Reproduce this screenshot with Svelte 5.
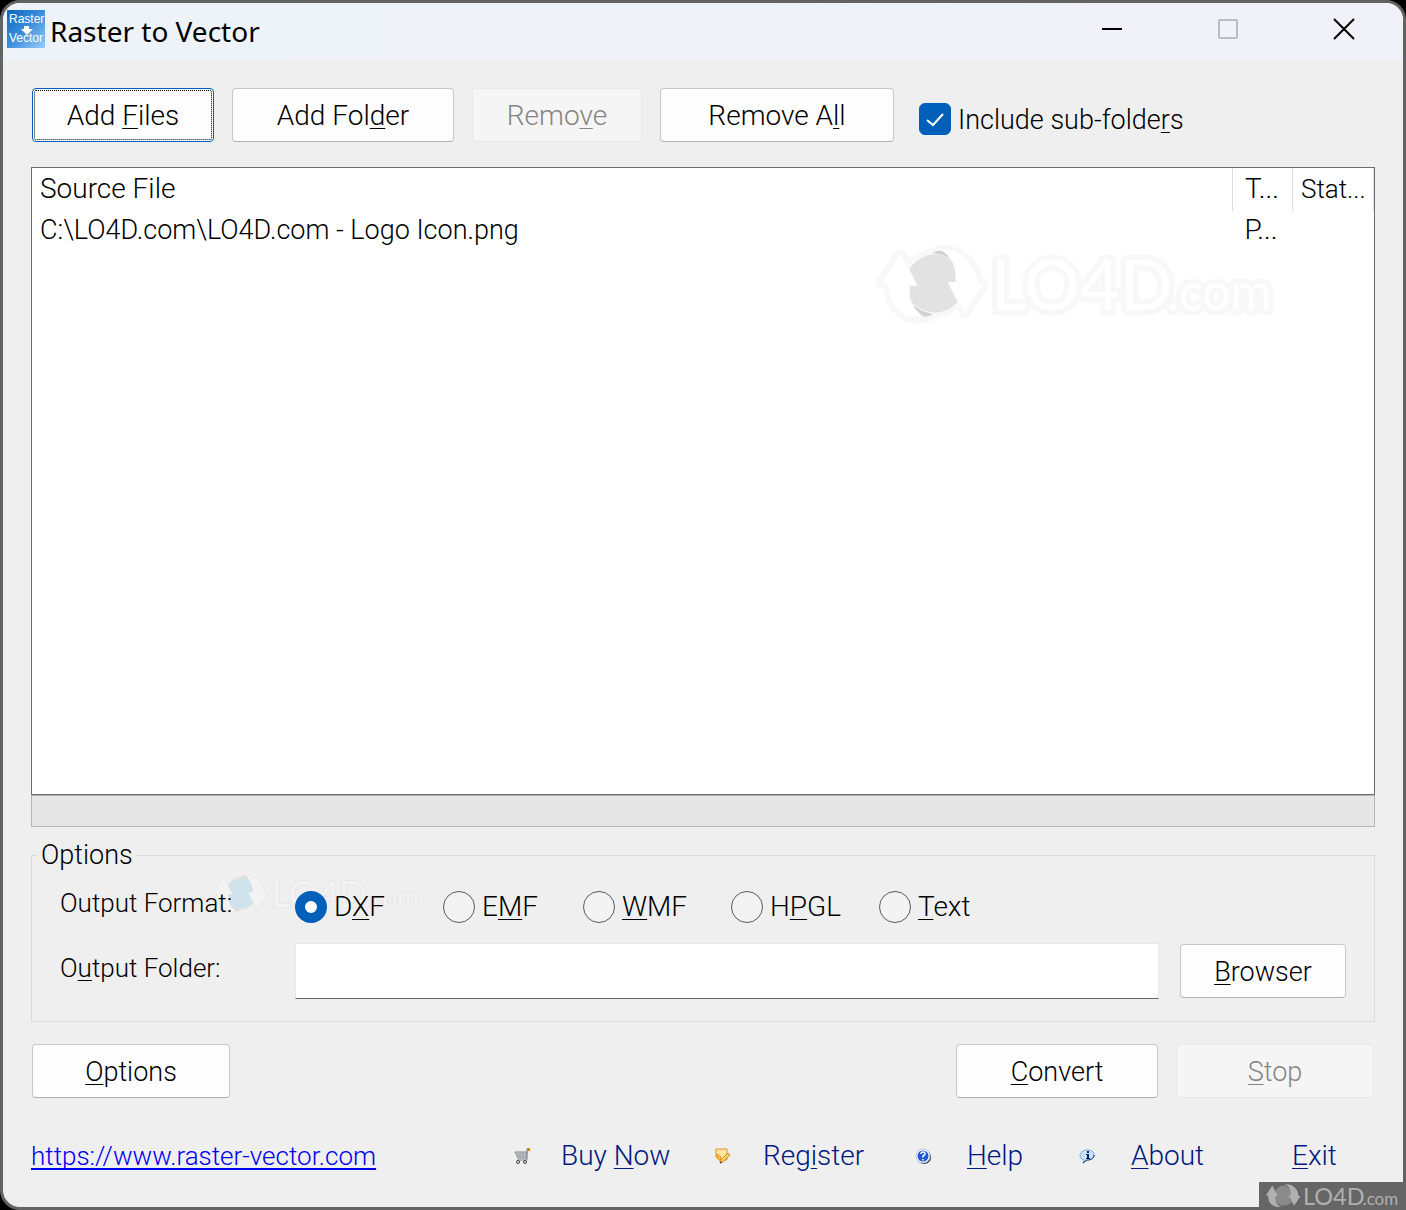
<script>
  let includeSub = $state(true);
  let format = $state('DXF');
  let folder = $state('');

  const formats = [
    { id: 'DXF', pre: 'D', key: 'X', post: 'F' },
    { id: 'EMF', pre: 'E', key: 'M', post: 'F' },
    { id: 'WMF', pre: '', key: 'W', post: 'MF' },
    { id: 'HPGL', pre: 'H', key: 'P', post: 'GL' },
    { id: 'Text', pre: '', key: 'T', post: 'ext' }
  ];
  const files = [{ source: 'C:\\LO4D.com\\LO4D.com - Logo Icon.png', type: 'P...', status: '' }];
</script>

{#snippet brand(kind)}
  <svg class="brand {kind}" viewBox="40 40 1230 250" aria-hidden="true">
    <g class="halo">
      <path d="M123 73 L173 166 H151 Q142 225 215 257 Q155 282 115 240 Q83 210 86 160 H64 Z" />
      <path d="M220 69 Q270 48 318 87 Q353 120 354 163 H372 L315 250 L264 157 H288 Q292 100 220 69 Z" />
      <circle cx="220" cy="162" r="88" />
      <text x="394" y="240" class="big">LO4D</text>
      <text x="922" y="240" class="small">.com</text>
    </g>
    <path class="ball" d="M149 119 Q180 75 225 74 Q262 76 289 103 L288 157 H264 L293 217 Q265 248 225 249 Q178 246 148 209 L151 168 H173 Z" />
    <path class="shade" d="M148 215 Q180 248 220 253 Q205 264 185 259 Q155 245 148 215 Z M218 70 Q235 60 256 64 Q285 78 289 101 Q265 75 218 70 Z" />
    <g class="face">
      <path d="M123 73 L173 166 H151 Q142 225 190 260 Q145 268 115 240 Q83 210 86 160 H64 Z" />
      <path d="M240 60 Q285 55 318 87 Q353 120 354 163 H372 L315 250 L264 157 H288 Q292 85 240 60 Z" />
      <text x="394" y="240" class="big">LO4D</text>
      <text x="922" y="240" class="small">.com</text>
    </g>
  </svg>
{/snippet}

<div class="window">
  <header>
    <svg class="app-icon" viewBox="0 0 38 38" aria-hidden="true">
      <defs>
        <linearGradient id="sky" x1="0" y1="0" x2="1" y2="1">
          <stop offset="0" stop-color="#0a67bd" />
          <stop offset=".5" stop-color="#3c8edb" />
          <stop offset="1" stop-color="#9ccbf6" />
        </linearGradient>
      </defs>
      <rect width="38" height="38" fill="url(#sky)" />
      <text x="2" y="13">Raster</text>
      <path d="M17 16h5v3h4l-6 6-6-6h3z" fill="#fff" />
      <text x="2" y="32">Vector</text>
    </svg>
    <h1>Raster to Vector</h1>
    <div class="captions">
      <button class="cap" aria-label="Minimize"><svg viewBox="0 0 22 22"><path d="M1 11H21" stroke="#000" stroke-width="2" /></svg></button>
      <button class="cap" aria-label="Maximize" disabled><svg viewBox="0 0 22 22"><rect x="2" y="2" width="18" height="18" rx="1" fill="none" stroke="#bdbdc0" stroke-width="2" /></svg></button>
      <button class="cap" aria-label="Close"><svg viewBox="0 0 22 22"><path d="M1 1L21 21M21 1L1 21" stroke="#000" stroke-width="2" /></svg></button>
    </div>
  </header>

  <main>
    <div class="toolbar">
      <button class="btn focused files">Add&nbsp;<u>F</u>iles</button>
      <button class="btn folder">Add Fol<u>d</u>er</button>
      <button class="btn remove" disabled>Remo<u>v</u>e</button>
      <button class="btn all">Remove A<u>l</u>l</button>
      <label class="check">
        <span class="tick">
          <input type="checkbox" bind:checked={includeSub} />
          {#if includeSub}<svg viewBox="0 0 32 32"><path d="M8 17L14 22L24 11" fill="none" stroke="#fff" stroke-width="2" /></svg>{/if}
        </span>
        <span class="check-text">Include sub-folde<u>r</u>s</span>
      </label>
    </div>

    <div class="list">
      <table>
        <colgroup><col /><col class="c-type" /><col class="c-status" /></colgroup>
        <thead>
          <tr><th>Source File</th><th>T...</th><th>Stat...</th></tr>
        </thead>
        <tbody>
          {#each files as f}
            <tr><td>{f.source}</td><td>{f.type}</td><td>{f.status}</td></tr>
          {/each}
        </tbody>
      </table>
      {@render brand('light')}
    </div>
    <div class="progress" role="progressbar" aria-label="Progress" aria-valuenow="0"></div>

    <fieldset>
      <legend>Options</legend>
      {@render brand('tinted')}
      <div class="formats" role="radiogroup" aria-labelledby="fmt">
        <span id="fmt" class="caption">Output Format:</span>
        {#each formats as f}
          <label class="radio {f.id.toLowerCase()}">
            <input type="radio" name="format" value={f.id} bind:group={format} />
            <span>{f.pre}<u>{f.key}</u>{f.post}</span>
          </label>
        {/each}
      </div>
      <div class="output">
        <label class="caption" for="out">O<u>u</u>tput Folder:</label>
        <input id="out" type="text" bind:value={folder} />
        <button class="btn browse"><u>B</u>rowser</button>
      </div>
    </fieldset>

    <div class="actions">
      <button class="btn options"><u>O</u>ptions</button>
      <button class="btn convert"><u>C</u>onvert</button>
      <button class="btn stop" disabled><u>S</u>top</button>
    </div>

    <footer>
      <a class="site" href="https://www.raster-vector.com">https://www.raster-vector.com</a>
      <nav>
        <svg viewBox="0 0 18 18">
          <path d="M2 5H14L13 11H5Z" fill="#d8d8e0" stroke="#85858f" />
          <path d="M4 7H13M4 9H13M7 5V11M10 5V11" stroke="#9a9aa5" />
          <path d="M17 2H14V13H4" fill="none" stroke="#777782" />
          <path d="M14 1h3v3h-3z" fill="#c88a20" />
          <circle cx="5" cy="15" r="1.5" fill="#eee" stroke="#444" /><circle cx="12" cy="15" r="1.5" fill="#eee" stroke="#444" />
        </svg>
        <a href="#buy">Buy <u>N</u>ow</a>
        <svg viewBox="0 0 18 18">
          <path d="M1 2H12V13H6L1 10Z" fill="#ffe7a0" stroke="#e8912a" />
          <path d="M2 7L6 10L5 14L2 11Z" fill="#ffc42e" stroke="#d99220" />
          <path d="M13 6L15 8L8 15L5 16L6 13Z" fill="#ffd65c" stroke="#c98a25" /><path d="M5 16l2-1" stroke="#333" />
        </svg>
        <a href="#register">Reg<u>i</u>ster</a>
        <svg viewBox="0 0 18 18">
          <circle cx="9" cy="10" r="7" fill="#222c48" /><circle cx="8" cy="9" r="7" fill="#fff" stroke="#b4c4e4" />
          <circle cx="8" cy="9" r="5.5" fill="#1c58d4" />
          <path d="M6 7Q6 5 8 5T10 7Q10 8 8 9V10.500M8 12V13.500" fill="none" stroke="#fff" stroke-width="1.500" />
        </svg>
        <a href="#help"><u>H</u>elp</a>
        <svg viewBox="1 0 18 18">
          <path d="M9 3C14 3 16 5 16 8S13 13 9 13L5 16L6 13C3 12 2 10 2 8S5 3 9 3Z" fill="#c9e4fa" stroke="#7fa5cf" />
          <path d="M16 8C16 11 14 13 9 13L5 16" fill="none" stroke="#1c3a70" />
          <path d="M9 4h2v2H9zM8 7h3v4h1v1H8v-1h1V8H8z" fill="#0a2472" />
        </svg>
        <a href="#about"><u>A</u>bout</a>
        <a href="#exit"><u>E</u>xit</a>
      </nav>
    </footer>
  </main>
</div>
<div class="stamp">{@render brand('gray')}</div>

<style>
  :global(body) { background: #000; }
  * { box-sizing: border-box; }
  .window {
    display: flex;
    flex-direction: column;
    min-height: 100vh;
    border: 3px solid #636363;
    border-radius: 20px;
    background: #efefef;
    overflow: hidden;
    color: #000;
    font: 300 28px/40px Roboto, "Liberation Sans", sans-serif;
  }
  header {
    display: flex;
    align-items: center;
    height: 56px;
    padding: 0 1px 0 4px;
    background: linear-gradient(90deg, #edf3f8, #f1f2f9);
  }
  .app-icon { width: 38px; height: 38px; margin-bottom: 4px; }
  .app-icon text { font: 400 12px "Liberation Sans", sans-serif; fill: #fff; }
  h1 { margin: 0 0 0 5px; font: 400 28px/48px "Noto Sans", "Open Sans", sans-serif; }
  .captions { display: flex; margin-left: auto; height: 100%; }
  .cap { width: 116px; padding: 0 0 4px; border: 0; background: none; }
  .cap svg { width: 22px; height: 22px; display: block; margin: 0 auto; }
  u { text-decoration-thickness: 1px; text-underline-offset: 3px; text-decoration-skip-ink: none; }

  main { flex: 1; display: flex; flex-direction: column; padding: 29px 28px 31px; }
  .btn {
    height: 54px;
    padding: 2px 0 0;
    border: 1px solid #c8c8c8;
    border-bottom-color: #b0b0b0;
    border-radius: 4px;
    background: #fdfdfd;
    color: #000;
    font: inherit;
  }
  .btn:disabled { background: #f5f5f5; border-color: #e8e8e8; color: #858585; }
  .focused { border-color: #0060c0; outline: 1px dotted #000; outline-offset: -3px; }
  .toolbar { display: flex; gap: 18px; padding-left: 1px; }
  .files { width: 182px; }
  .folder { width: 222px; }
  .remove { width: 170px; }
  .all { width: 234px; }
  .check { display: flex; align-items: center; gap: 7px; height: 62px; margin: 0 0 -8px 7px; }
  .check-text { padding-top: 2px; font-size: 27px; }
  .tick { display: grid; width: 32px; height: 32px; }
  .tick > * { grid-area: 1 / 1; pointer-events: none; }
  .tick input { appearance: none; width: 32px; height: 32px; margin: 0; border: 1px solid #005fb8; border-radius: 6px; background: #fff; pointer-events: auto; }
  .tick input:checked { background: #005fb8; }

  .list { position: relative; flex: 1; margin-top: 25px; border: 1px solid #6b6d72; background: #fff; }
  table { width: 100%; border-collapse: collapse; table-layout: fixed; }
  .c-type { width: 60px; }
  .c-status { width: 81px; }
  th, td { padding: 0 0 0 8px; height: 38px; text-align: left; font-size: 27px; font-weight: 300; line-height: 38px; white-space: nowrap; }
  th { height: 43px; padding-bottom: 2px; border-right: 1px solid #dedede; font-size: 28px; }
  th:last-child { font-size: 26px; }
  td { line-height: 36px; }
  th:nth-child(2), td:nth-child(2) { padding-left: 12px; font-size: 28px; }
  .progress { height: 32px; border: 1px solid #b5b5b5; background: #e6e6e6; }

  fieldset { position: relative; margin: 8px 0 0; padding: 10px 28px 22px; border: 1px solid #dadada; min-width: 0; }
  legend { padding: 0 4px; margin-left: -23px; font-size: 27px; }
  .caption { width: 235px; flex: none; font-size: 26px; }
  .formats { display: flex; position: relative; margin-top: -2px; height: 48px; }
  .radio { display: flex; align-items: center; gap: 7px; height: 48px; width: 148px; }
  .radio.emf { width: 140px; }
  .radio input { appearance: none; width: 32px; height: 32px; margin: 0; border: 1px solid #5c5c5c; border-radius: 50%; background: #f3f3f3; }
  .radio input:checked { border: 11px solid #005fb8; border-width: 10px; background: #fff; }
  .output { display: flex; position: relative; align-items: center; margin-top: 12px; }
  .output .caption { padding-bottom: 6px; }
  .output input { flex: 1; min-width: 0; height: 56px; padding: 0 8px; border: 1px solid #e8e8e8; border-bottom-color: #5f6064; background: #fff; font: inherit; }
  .browse { width: 166px; margin-left: 21px; font-size: 27px; }

  .actions { display: flex; gap: 18px; margin-top: 22px; padding: 0 1px; }
  .actions .btn { font-size: 27px; }
  .options { width: 198px; margin-right: auto; }
  .convert { width: 202px; }
  .stop { width: 198px; }
  footer { display: flex; align-items: center; justify-content: space-between; margin-top: 38px; }
  footer a { color: #00187f; text-decoration: none; white-space: nowrap; }
  footer .site { color: #0000f0; font-size: 26px; text-decoration: underline 2px; text-underline-offset: 3px; text-decoration-skip-ink: none; }
  nav { display: grid; grid-template-columns: 48px 154px 48px 152px 52px 112px 52px 161px 83px; align-items: center; }
  nav svg { width: 18px; height: 18px; }

  .brand { display: block; pointer-events: none; }
  .brand text { font-family: Lato, sans-serif; font-weight: 400; }
  .big { font-size: 208px; }
  .small { font-size: 150px; }
  .light { position: absolute; top: 75px; right: 91px; width: 410px; }
  .light .halo { fill: #f8f8f8; stroke: #f8f8f8; stroke-width: 32px; stroke-linejoin: round; }
  .light .face { fill: #fff; }
  .light .ball { fill: #e2e2e2; }
  .light .shade { fill: #d2d2d2; }
  .tinted { position: absolute; top: -3px; left: 177px; width: 216px; }
  .tinted .halo { fill: #e9e9e9; stroke: #e9e9e9; stroke-width: 14px; }
  .tinted .face { fill: #f3f3f3; }
  .tinted .ball { fill: #d0e3ec; }
  .tinted .shade { fill: #dadada; }
  .stamp { position: fixed; right: 0; bottom: 0; width: 147px; height: 28px; padding: 0 4px; background: #666; overflow: hidden; }
  .gray { width: 139px; }
  .gray .halo { fill: none; }
  .gray .face { fill: #b0b0b0; }
  .gray .ball { fill: #8b8b8b; }
  .gray .shade { fill: #777; }
</style>
